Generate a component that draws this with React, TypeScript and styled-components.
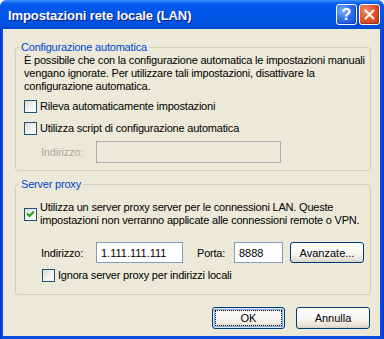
import React from "react";
import styled, { createGlobalStyle } from "styled-components";

const GlobalStyle = createGlobalStyle`
  html, body {
    margin: 0;
    padding: 0;
    background: #ffffff;
  }
  body {
    font-family: "Liberation Sans", Arial, sans-serif;
  }
`;

const Window = styled.div`
  width: 384px;
  height: 339px;
  display: flex;
  flex-direction: column;
  border-radius: 7px 7px 0 0;
  overflow: hidden;
  background: linear-gradient(to right, #0831d9, #0a4ce0 2px, #0a4ce0 calc(100% - 2px), #0831d9);
`;

const TitleBar = styled.div`
  height: 29px;
  flex: none;
  display: flex;
  align-items: center;
  padding: 0 4px 0 8px;
  background: linear-gradient(
    to bottom,
    #3e95ff 0px,
    #0a63f0 3px,
    #0058ee 6px,
    #0055e5 16px,
    #0053e0 24px,
    #0049d0 29px
  );
`;

const Title = styled.div`
  flex: 1;
  color: #ffffff;
  font-weight: bold;
  font-size: 13px;
  letter-spacing: -0.1px;
  text-shadow: 1px 1px 0 #0a1883;
  padding-top: 1px;
`;

const CaptionButton = styled.div<{ $close?: boolean }>`
  width: 21px;
  height: 21px;
  box-sizing: border-box;
  border: 1px solid #ffffff;
  border-radius: 3px;
  margin-left: 2px;
  display: flex;
  align-items: center;
  justify-content: center;
  color: #ffffff;
  font-weight: bold;
  font-size: 16px;
  background: ${(p) =>
    p.$close
      ? "radial-gradient(circle at 30% 30%, #f09070 0%, #e2552c 45%, #c63a14 100%)"
      : "radial-gradient(circle at 30% 30%, #7ab0ff 0%, #2c6cf0 50%, #1b4fd8 100%)"};
  box-shadow: inset -1px -1px 1px rgba(0, 0, 60, 0.3);
`;

const Body = styled.div`
  flex: 1;
  margin: 0 4px 3px 3px;
  background: #ece9d8;
  padding: 12px 9px 0 12px;
  display: flex;
  flex-direction: column;
  font-size: 11px;
  color: #000000;
  letter-spacing: -0.2px;
`;

const Group = styled.fieldset<{ $top?: number }>`
  margin: ${(p) => p.$top ?? 0}px 0 0 0;
  padding: 0 8px ${(p) => (p.$top ? 12 : 7)}px 8px;
  border: 1px solid #d0d0bf;
  border-radius: 3px;
  min-width: 0;
`;

const Legend = styled.legend`
  color: #0046d5;
  font-size: 11px;
  line-height: 13px;
  padding: 0 2px;
  margin-left: -5px;
`;

const Text = styled.p`
  margin: 0;
  line-height: 13px;
  white-space: nowrap;
`;

const CheckRow = styled.div<{ $top: number; $indent?: number }>`
  display: flex;
  align-items: center;
  gap: 3px;
  margin-top: ${(p) => p.$top}px;
  padding-left: ${(p) => p.$indent ?? 0}px;
  line-height: 13px;
  white-space: nowrap;
`;

const Box = styled.span`
  width: 13px;
  height: 13px;
  flex: none;
  box-sizing: border-box;
  border: 1px solid #1c5180;
  background: linear-gradient(135deg, #dcdcd7 0%, #f4f4f0 60%, #ffffff 100%);
  display: flex;
  align-items: center;
  justify-content: center;
`;

const FieldRow = styled.div<{ $top: number }>`
  display: flex;
  align-items: center;
  margin-top: ${(p) => p.$top}px;
  padding-left: 17px;
  white-space: nowrap;
`;

const Label = styled.span<{ $width: number; $disabled?: boolean; $gap?: number }>`
  width: ${(p) => p.$width}px;
  margin-left: ${(p) => p.$gap ?? 0}px;
  color: ${(p) => (p.$disabled ? "#aca899" : "#000000")};
  flex: none;
`;

const Input = styled.div<{ $width: number; $height: number; $disabled?: boolean }>`
  width: ${(p) => p.$width}px;
  height: ${(p) => p.$height}px;
  box-sizing: border-box;
  border: 1px solid ${(p) => (p.$disabled ? "#a5adb5" : "#7f9db9")};
  background: ${(p) => (p.$disabled ? "#ece9d8" : "#ffffff")};
  padding: 0 0 0 4px;
  display: flex;
  align-items: center;
  flex: none;
  letter-spacing: 0;
`;

const Button = styled.div<{ $width: number; $height: number; $default?: boolean; $gap?: number }>`
  position: relative;
  width: ${(p) => p.$width}px;
  height: ${(p) => p.$height}px;
  margin-left: ${(p) => p.$gap ?? 0}px;
  box-sizing: border-box;
  border: 1px solid #003c74;
  border-radius: 3px;
  background: linear-gradient(to bottom, #ffffff 0%, #f5f4ef 60%, #e3e0d5 90%, #d6d0c5 100%);
  display: flex;
  align-items: center;
  justify-content: center;
  flex: none;
  letter-spacing: 0;
  box-shadow: ${(p) =>
    p.$default ? "inset 0 0 0 1px #cee7ff, inset 0 0 0 2px #89ade4" : "none"};

  &::after {
    content: "";
    display: ${(p) => (p.$default ? "block" : "none")};
    position: absolute;
    inset: 2px;
    border: 1px dotted #000000;
  }
`;

const Footer = styled.div`
  display: flex;
  justify-content: flex-end;
  margin-top: 12px;
  padding-right: 1px;
`;

function Check({ checked }: { checked?: boolean }) {
  return (
    <Box>
      {checked && (
        <svg width="9" height="9" viewBox="0 0 9 9">
          <path d="M1 3.5 L3.5 6 L8 1.5" fill="none" stroke="#21a121" strokeWidth="2" />
        </svg>
      )}
    </Box>
  );
}

function App() {
  return (
    <>
      <GlobalStyle />
      <Window>
        <TitleBar>
          <Title>Impostazioni rete locale (LAN)</Title>
          <CaptionButton>?</CaptionButton>
          <CaptionButton $close>
            <svg width="11" height="11" viewBox="0 0 11 11">
              <path d="M1.5 1.5 L9.5 9.5 M9.5 1.5 L1.5 9.5" stroke="#ffffff" strokeWidth="2" strokeLinecap="round" />
            </svg>
          </CaptionButton>
        </TitleBar>
        <Body>
          <Group>
            <Legend>Configurazione automatica</Legend>
            <Text>
              È possibile che con la configurazione automatica le impostazioni manuali
              <br />
              vengano ignorate. Per utilizzare tali impostazioni, disattivare la
              <br />
              configurazione automatica.
            </Text>
            <CheckRow $top={7}>
              <Check />
              Rileva automaticamente impostazioni
            </CheckRow>
            <CheckRow $top={9}>
              <Check />
              Utilizza script di configurazione automatica
            </CheckRow>
            <FieldRow $top={6}>
              <Label $width={55} $disabled>
                Indirizzo:
              </Label>
              <Input $width={185} $height={22} $disabled />
            </FieldRow>
          </Group>
          <Group $top={7}>
            <Legend>Server proxy</Legend>
            <CheckRow $top={10}>
              <Check checked />
              <Text>
                Utilizza un server proxy server per le connessioni LAN. Queste
                <br />
                impostazioni non verranno applicate alle connessioni remote o VPN.
              </Text>
            </CheckRow>
            <FieldRow $top={15}>
              <Label $width={55}>Indirizzo:</Label>
              <Input $width={87} $height={21}>
                1.111.111.111
              </Input>
              <Label $width={37} $gap={14}>
                Porta:
              </Label>
              <Input $width={49} $height={21}>
                8888
              </Input>
              <Button $width={74} $height={21} $gap={7}>
                Avanzate...
              </Button>
            </FieldRow>
            <CheckRow $top={6} $indent={18}>
              <Check />
              Ignora server proxy per indirizzi locali
            </CheckRow>
          </Group>
          <Footer>
            <Button $width={73} $height={22} $default>
              OK
            </Button>
            <Button $width={74} $height={22} $gap={11}>
              Annulla
            </Button>
          </Footer>
        </Body>
      </Window>
    </>
  );
}

export default App;
